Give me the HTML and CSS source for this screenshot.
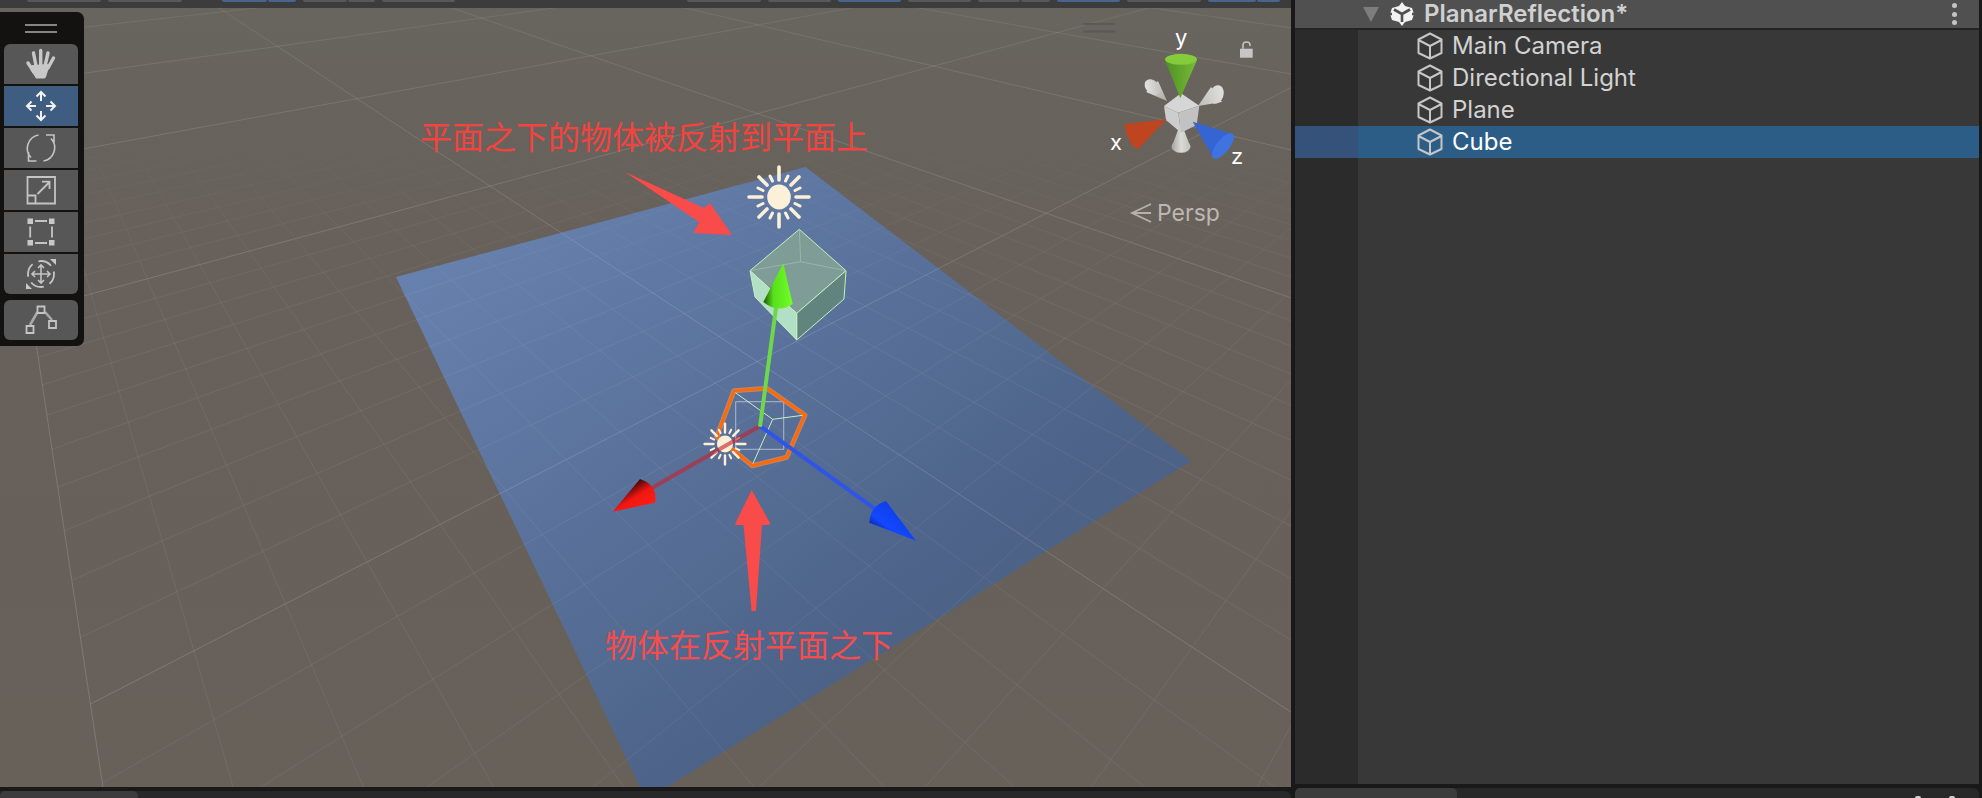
FILE: index.html
```html
<!DOCTYPE html>
<html lang="en">

<head>
    <meta charset="UTF-8">
    <title>PlanarReflection</title>
    <link rel="stylesheet" href="styles.css">
</head>

<body>
    <div class="page">
        <div class="left">
            <div class="top-bar">
                <span class="tb w74"></span>
                <span class="tb w74"></span>
                <span class="tb-group far">
                    <span class="tb on w45"></span>
                    <span class="tb on w28"></span>
                </span>
                <span class="tb-group">
                    <span class="tb w44"></span>
                    <span class="tb w27"></span>
                </span>
                <span class="tb w73"></span>
                <span class="tb w74 farther"></span>
                <span class="tb w63"></span>
                <span class="tb on w63"></span>
                <span class="tb w63"></span>
                <span class="tb-group">
                    <span class="tb w42"></span>
                    <span class="tb w29"></span>
                </span>
                <span class="tb on w63"></span>
                <span class="tb w74"></span>
                <span class="tb-group">
                    <span class="tb on w48"></span>
                    <span class="tb on w23"></span>
                </span>
            </div>

            <div class="scene">
                <svg class="scene-view" viewBox="0 8 1291 779" width="1291" height="779">
                    <defs>
                        <linearGradient id="planeFill" gradientUnits="userSpaceOnUse" x1="450" y1="250" x2="800" y2="700">
                            <stop offset="0" stop-color="#6781ae" />
                            <stop offset="1" stop-color="#4c6287" />
                        </linearGradient>
                        <linearGradient id="redCone" gradientUnits="userSpaceOnUse" x1="640" y1="479" x2="655" y2="503">
                            <stop offset="0" stop-color="#3a0808" />
                            <stop offset=".45" stop-color="#f01612" />
                            <stop offset="1" stop-color="#ff1f14" />
                        </linearGradient>
                        <linearGradient id="blueCone" gradientUnits="userSpaceOnUse" x1="886" y1="501" x2="869" y2="523">
                            <stop offset="0" stop-color="#0f3fe8" />
                            <stop offset=".7" stop-color="#1348ff" />
                            <stop offset="1" stop-color="#0a2ab0" />
                        </linearGradient>
                        <linearGradient id="greenCone" gradientUnits="userSpaceOnUse" x1="763" y1="300" x2="793" y2="300">
                            <stop offset="0" stop-color="#1c4f08" />
                            <stop offset=".35" stop-color="#58e01c" />
                            <stop offset="1" stop-color="#72ff28" />
                        </linearGradient>
                        <linearGradient id="gizmoGreen" gradientUnits="userSpaceOnUse" x1="1165" y1="70" x2="1197" y2="70">
                            <stop offset="0" stop-color="#4f8f24" />
                            <stop offset="1" stop-color="#78bc36" />
                        </linearGradient>
                        <linearGradient id="greyA" gradientUnits="userSpaceOnUse" x1="1146" y1="84" x2="1168" y2="104">
                            <stop offset="0" stop-color="#e2e2e0" />
                            <stop offset="1" stop-color="#a2a09c" />
                        </linearGradient>
                        <linearGradient id="greyB" gradientUnits="userSpaceOnUse" x1="1222" y1="92" x2="1198" y2="106">
                            <stop offset="0" stop-color="#dededc" />
                            <stop offset="1" stop-color="#bcbcb8" />
                        </linearGradient>
                        <linearGradient id="greyC" gradientUnits="userSpaceOnUse" x1="1172" y1="140" x2="1190" y2="140">
                            <stop offset="0" stop-color="#a8a6a2" />
                            <stop offset=".5" stop-color="#dadad8" />
                            <stop offset="1" stop-color="#c2c2be" />
                        </linearGradient>
                    </defs>

                    <polygon class="plane" points="396,277 805.5,167 1191,461 667,787 640,787" />
                    <g id="grid"></g>

                    <!-- reflected cube -->
                    <polygon class="cube-top" points="799.3,229.3 846,270.7 796.7,313.3 750,270.7" />
                    <polygon class="cube-right" points="846,270.7 844,299 796.7,340 796.7,313.3" />
                    <polygon class="cube-left" points="750,270.7 796.7,313.3 796.7,340 755,297" />
                    <path class="cube-back" d="M799.3 229.3 L800.7 261.7 L750 270.7 M800.7 261.7 L846 270.7" />

                    <!-- big sun -->
                    <g class="sun" transform="translate(779 197)">
                        <ellipse class="sun-disc" rx="11.8" ry="12.4" />
                        <path class="ray-long" d="M0 -17V-30 M0 17V30 M-17 0H-30 M17 0H30 M12 -12L20 -20 M-12 -12L-20 -20 M12 12L20 20 M-12 12L-20 20" />
                        <path class="ray-short" d="M6.5 -16L9 -21 M-6.5 -16L-9 -21 M6.5 16L9 21 M-6.5 16L-9 21 M16 -6.5L21 -9 M-16 -6.5L-21 -9 M16 6.5L21 9 M-16 6.5L-21 9" />
                    </g>

                    <!-- selection and wire cube -->
                    <rect class="wire-box" x="735.7" y="401.7" width="48" height="47.6" />
                    <path class="wire" d="M734 391.7 L772.7 419.3 L805 415 M772.7 419.3 L752.3 465" />
                    <polygon class="outline-glow" points="734,390.7 766.7,388.3 805,415 786.7,457.3 752.3,465.7 716.7,436.7" />
                    <polygon class="outline" points="734,390.7 766.7,388.3 805,415 786.7,457.3 752.3,465.7 716.7,436.7" />

                    <!-- small sun -->
                    <g class="sun" transform="translate(725 444) scale(.68)">
                        <ellipse class="sun-disc" rx="11.8" ry="12.4" />
                        <path class="ray-long" d="M0 -17V-30 M0 17V30 M-17 0H-30 M17 0H30 M12 -12L20 -20 M-12 -12L-20 -20 M12 12L20 20 M-12 12L-20 20" />
                        <path class="ray-short" d="M6.5 -16L9 -21 M-6.5 -16L-9 -21 M6.5 16L9 21 M-6.5 16L-9 21 M16 -6.5L21 -9 M-16 -6.5L-21 -9 M16 6.5L21 9 M-16 6.5L-21 9" />
                    </g>

                    <!-- move handles -->
                    <line class="axis-red" x1="760" y1="426" x2="650" y2="489" />
                    <line class="axis-blue" x1="760" y1="426" x2="878" y2="511" />
                    <line class="axis-green" x1="760" y1="426.7" x2="776" y2="308" />
                    <path fill="url(#redCone)" d="M612.7 511.7 L640 479 Q658 485 655 502.7 Z" />
                    <path fill="url(#blueCone)" d="M916 540.7 L886 501 Q870 506 869.3 522.7 Z" />
                    <path fill="url(#greenCone)" d="M783.3 263.3 L763.3 302 Q778 314 792.7 304 Z" />

                    <!-- red arrows -->
                    <polygon class="mark" points="625,172 704,208 710,203 732,235 693.5,233 699,222" />
                    <path class="mark" d="M751.7 490 L770 523 Q770.5 525 768 525 L762 525 L756 611 L751.6 611 L743.5 525 L737 525 Q734.5 525 735.5 523 Z" />

                    <text class="note note-top" x="420" y="149">平面之下的物体被反射到平面上</text>
                    <text class="note note-low" x="605" y="657">物体在反射平面之下</text>

                    <!-- orientation gizmo -->
                    <path fill="url(#greyA)" d="M1167 101 L1146 92 L1158 81 Z" />
                    <ellipse fill="url(#greyA)" cx="1152.5" cy="87" rx="6.5" ry="9" transform="rotate(-48 1152.5 87)" />
                    <path fill="url(#greyB)" d="M1198 106 L1211 87 L1222 102 Z" />
                    <ellipse fill="url(#greyB)" cx="1216.5" cy="94.5" rx="7" ry="9.5" transform="rotate(20 1216.5 94.5)" />
                    <path fill="url(#greyC)" d="M1181 122 L1172 146 H1190 Z" />
                    <ellipse fill="url(#greyC)" cx="1181" cy="146.5" rx="9.5" ry="6.3" />
                    <polygon class="gz-top" points="1181,93.3 1199.3,105.7 1178.3,112.7 1164,106" />
                    <polygon class="gz-left" points="1164,106 1178.3,112.7 1181,132.7 1166,120" />
                    <polygon class="gz-right" points="1199.3,105.7 1196.7,125 1181,132.7 1178.3,112.7" />
                    <path fill="url(#gizmoGreen)" d="M1180.3 98.3 L1165 60 H1197 Z" />
                    <ellipse class="gz-green-cap" cx="1181" cy="59.3" rx="16" ry="5.5" />
                    <path class="gz-red" d="M1166.7 119.3 L1124.3 124.3 Q1127 142 1137.3 150 Z" />
                    <path class="gz-blue" d="M1192.7 121.7 L1232.7 134 L1213.3 157.7 Z" />
                    <ellipse class="gz-blue-cap" cx="1223" cy="146" rx="6.5" ry="15.5" transform="rotate(39 1223 146)" />
                    <text class="axis-name" x="1175" y="45">y</text>
                    <text class="axis-name" x="1110" y="150">x</text>
                    <text class="axis-name" x="1231" y="164">z</text>

                    <!-- lock -->
                    <rect class="lock" x="1240" y="48.7" width="12.7" height="9" />
                    <path class="lock-loop" d="M1243 48.7 V45 Q1243 42 1246.5 42 Q1250 42 1250 45 V46" />

                    <!-- persp label -->
                    <path class="persp-icon" d="M1151 204 L1132 213 L1151 222 M1133 213 H1151" />
                    <text class="persp" x="1157" y="221">Persp</text>

                    <!-- handle of the gizmo overlay -->
                    <path class="grip-dim" d="M1083 24 H1115 M1083 31.5 H1115" />
                </svg>

                <div class="tools">
                    <div class="tools-grip"></div>
                    <div class="tool first">
                        <svg class="tool-icon" viewBox="0 0 32 32">
                            <path class="fill" d="M7 17 L25 16 L21 29 L19.5 30.5 H11 L9.5 28 L5.5 22 Z" />
                            <path class="finger" d="M8.5 5 L11 18 M15.7 2.5 V18 M23 5 L20 18 M28.5 10 L23 20 M3 15 L9 24" />
                        </svg>
                    </div>
                    <div class="tool on">
                        <svg class="tool-icon" viewBox="0 0 32 32">
                            <path class="line bright" d="M16 2 V11 M16 21 V30 M2 16 H11 M21 16 H30 M11.5 6.5 L16 2 L20.5 6.5 M11.5 25.5 L16 30 L20.5 25.5 M6.5 11.5 L2 16 L6.5 20.5 M25.5 11.5 L30 16 L25.5 20.5" />
                        </svg>
                    </div>
                    <div class="tool">
                        <svg class="tool-icon" viewBox="0 0 32 32">
                            <path class="line spin" d="M13.5 3 A13.5 13.5 0 0 0 6 25.5 M3.5 20 V29 H11.5 M18.5 29 A13.5 13.5 0 0 0 26 6.5 M21 3 H29 V11.5" />
                        </svg>
                    </div>
                    <div class="tool">
                        <svg class="tool-icon" viewBox="0 0 32 32">
                            <path class="line" d="M2.5 3 H30 V29.5 H2.5 Z M3 21.5 H10.5 V29 M12.5 20 L24.5 8 M17 7.7 H24.5 V15" />
                        </svg>
                    </div>
                    <div class="tool">
                        <svg class="tool-icon" viewBox="0 0 32 32">
                            <path class="fill" d="M2.5 2.5 H8 V8 H2.5 Z M24 2.5 H29.5 V8 H24 Z M2.5 24 H8 V29.5 H2.5 Z M24 24 H29.5 V29.5 H24 Z" />
                            <path class="line" d="M10 5 H22 M10 27 H22 M5.2 10.5 V21.5 M27 10.5 V21.5" />
                        </svg>
                    </div>
                    <div class="tool last">
                        <svg class="tool-icon" viewBox="0 0 32 32">
                            <path class="fill" d="M25 1 H31 V7 Z M1 25 V31 H7 Z" />
                            <circle class="line ring" cx="16" cy="16" r="13" />
                            <path class="line thin" d="M16 7 V25 M7 16 H25 M13 10 L16 7 L19 10 M13 22 L16 25 L19 22 M10 13 L7 16 L10 19 M22 13 L25 16 L22 19" />
                        </svg>
                    </div>
                    <div class="tool solo">
                        <svg class="tool-icon" viewBox="0 0 32 32">
                            <path class="line dim" d="M5 21 L12.5 8 M20 8 L27 16" />
                            <path class="line" d="M12.5 2.5 H19.5 V9 H12.5 Z M1.5 22 H8.5 V29 H1.5 Z M24 17 H31 V24 H24 Z" />
                        </svg>
                    </div>
                </div>
            </div>

            <div class="foot foot-left">
                <div class="foot-tab tab-left"></div>
            </div>
        </div>

        <div class="right">
            <div class="hier-head">
                <span class="tri"></span>
                <svg class="scene-icon" viewBox="0 0 26 24">
                    <path class="logo" d="M13 0 L16 4 L23 6 L25 12 L23 18 L16 20 L13 24 L10 20 L3 18 L1 12 L3 6 L10 4 Z" />
                    <path class="logo-cut" d="M13 12 V20 M13 12 L5 7.5 M13 12 L21 7.5 M3 12 H1 M25 12 H23" />
                </svg>
                <span class="scene-name">PlanarReflection*</span>
                <span class="dots"><i></i><i></i><i></i></span>
            </div>
            <div class="hier-list">
                <div class="row">
                    <svg class="go-icon" viewBox="0 0 26 28"><path d="M13 1.5 L24.5 7.5 V21 L13 26.5 L1.5 21 V7.5 Z M1.5 8 L13 14 L24.5 8 M13 14 V26" /></svg>
                    <span>Main Camera</span>
                </div>
                <div class="row">
                    <svg class="go-icon" viewBox="0 0 26 28"><path d="M13 1.5 L24.5 7.5 V21 L13 26.5 L1.5 21 V7.5 Z M1.5 8 L13 14 L24.5 8 M13 14 V26" /></svg>
                    <span>Directional Light</span>
                </div>
                <div class="row">
                    <svg class="go-icon" viewBox="0 0 26 28"><path d="M13 1.5 L24.5 7.5 V21 L13 26.5 L1.5 21 V7.5 Z M1.5 8 L13 14 L24.5 8 M13 14 V26" /></svg>
                    <span>Plane</span>
                </div>
                <div class="row selected">
                    <svg class="go-icon" viewBox="0 0 26 28"><path d="M13 1.5 L24.5 7.5 V21 L13 26.5 L1.5 21 V7.5 Z M1.5 8 L13 14 L24.5 8 M13 14 V26" /></svg>
                    <span>Cube</span>
                </div>
            </div>
            <div class="foot foot-right">
                <div class="foot-tab tab-right"></div>
                <span class="foot-dots"><i></i><i></i></span>
            </div>
        </div>
    </div>
    <script type="text/javascript" src="grid.js"></script>
</body>

</html>
```

FILE: styles.css
```css
* {
    box-sizing: border-box;
}

body {
    margin: 0;
    background: #191919;
    overflow: hidden;
}

.page {
    display: flex;
    width: 1982px;
    height: 798px;
    font-family: "Inter", "Liberation Sans", sans-serif;
}

.left {
    display: flex;
    flex-direction: column;
    width: 1291px;
}

/* top bar, only the lower edge of its buttons is in the picture */
.top-bar {
    display: flex;
    flex: none;
    gap: 7px;
    height: 8px;
    padding-left: 27px;
    background: #3c3c3c;
}

.tb {
    display: block;
    height: 2px;
    background: #585858;
    border-radius: 0 0 3px 3px;
}

.tb.on {
    background: #46658c;
}

.tb-group {
    display: flex;
    gap: 1px;
}

.far {
    margin-left: 33px;
}

.farther {
    margin-left: 225px;
}

.w23 { width: 23px; }
.w27 { width: 27px; }
.w28 { width: 28px; }
.w29 { width: 29px; }
.w42 { width: 42px; }
.w44 { width: 44px; }
.w45 { width: 45px; }
.w48 { width: 48px; }
.w63 { width: 63px; }
.w73 { width: 73px; }
.w74 { width: 74px; }

.scene {
    position: relative;
    flex: none;
    height: 779px;
    background: linear-gradient(#68645e, #68605a 40%, #67615a);
}

.scene-view {
    display: block;
}

.plane {
    fill: url(#planeFill);
}

.grid-major {
    stroke: #dcdcdc;
    stroke-width: 1;
}

.grid-minor {
    stroke: #d4d4d4;
    stroke-width: 1;
}

.cube-top {
    fill: #7f9c96;
}

.cube-right {
    fill: #62847f;
}

.cube-left {
    fill: #b2e0c4;
}

.cube-top,
.cube-right,
.cube-left {
    stroke: #c4f0c0;
    stroke-width: 1;
}

.cube-back {
    fill: none;
    stroke: #a4c8b4;
    stroke-width: 1;
    opacity: .6;
}

.sun-disc {
    fill: #fdf0d8;
}

.ray-long,
.ray-short {
    fill: none;
    stroke: #fdf0d8;
    stroke-linecap: round;
}

.ray-long {
    stroke-width: 3.6;
}

.ray-short {
    stroke-width: 3;
}

.wire-box {
    fill: none;
    stroke: #adb8cc;
    stroke-width: 1;
}

.wire {
    fill: none;
    stroke: #c2f0c0;
    stroke-width: 1;
}

.outline {
    fill: none;
    stroke: #ff6a00;
    stroke-width: 3;
    stroke-linejoin: round;
}

.outline-glow {
    fill: none;
    stroke: #ff9a66;
    stroke-width: 5;
    stroke-linejoin: round;
    opacity: .55;
}

.axis-red {
    stroke: #c4232f;
    stroke-width: 4;
    opacity: .62;
}

.axis-blue {
    stroke: #2f54e8;
    stroke-width: 4;
}

.axis-green {
    stroke: #6dd84b;
    stroke-width: 4;
}

.mark {
    fill: #f94b49;
}

.note {
    font-family: "Noto Sans CJK SC", "Liberation Sans", sans-serif;
    font-size: 32px;
}

.note-top {
    fill: #f4423f;
}

.note-low {
    fill: #f64c4c;
}

.gz-top {
    fill: #d6d6d6;
}

.gz-left {
    fill: #cdcdcd;
}

.gz-right {
    fill: #c2c2c2;
}

.gz-green-cap {
    fill: #84cc3c;
}

.gz-red {
    fill: #bf4420;
}

.gz-blue {
    fill: #3465d2;
}

.gz-blue-cap {
    fill: #3f73e0;
}

.axis-name {
    font-size: 22px;
    fill: #fff;
}

.lock {
    fill: #c6c6c6;
}

.lock-loop {
    fill: none;
    stroke: #c6c6c6;
    stroke-width: 1.6;
}

.persp-icon {
    fill: none;
    stroke: #b4b0ab;
    stroke-width: 1.8;
}

.persp {
    font-size: 23px;
    fill: #bcb8b3;
}

.grip-dim {
    fill: none;
    stroke: #595959;
    stroke-width: 2;
}

/* tool strip over the scene */
.tools {
    position: absolute;
    top: 4px;
    left: 0;
    display: flex;
    flex-direction: column;
    gap: 2px;
    width: 84px;
    height: 334px;
    padding: 32px 6px 6px 4px;
    background: #131211;
    border-radius: 0 7px 7px 0;
}

.tools-grip {
    position: absolute;
    top: 12px;
    left: 25px;
    width: 32px;
    height: 9px;
    border-top: 2px solid #858585;
    border-bottom: 2px solid #858585;
}

.tool {
    display: flex;
    align-items: center;
    justify-content: center;
    flex: none;
    height: 40px;
    background: #575757;
}

.tool.first {
    border-radius: 6px 6px 0 0;
}

.tool.last {
    border-radius: 0 0 6px 6px;
}

.tool.on {
    background: #3f5d80;
}

.tool.solo {
    margin-top: 4px;
    border-radius: 6px;
}

.tool-icon {
    width: 32px;
    height: 32px;
}

.fill {
    fill: #c8c8c8;
}

.finger {
    fill: none;
    stroke: #c8c8c8;
    stroke-width: 3.4;
    stroke-linecap: round;
}

.line {
    fill: none;
    stroke: #c4c4c4;
    stroke-width: 1.8;
}

.line.bright {
    stroke: #f2f2f2;
    stroke-width: 2;
}

.line.spin {
    stroke-width: 1.6;
}

.line.ring {
    stroke-dasharray: 14 6.4;
    stroke-dashoffset: 3;
}

.line.thin {
    stroke-width: 1.6;
}

.line.dim {
    stroke: #a8a8a8;
    stroke-width: 2.6;
}

/* tab strips under the panels */
.foot {
    flex: 1;
    margin-top: 4px;
    background: #282828;
}

.foot-left {
    border-radius: 0 6px 0 0;
}

.foot-right {
    display: flex;
    align-items: flex-end;
    justify-content: space-between;
    flex: none;
    height: 10px;
    border-radius: 6px 6px 0 0;
}

.foot-tab {
    height: 100%;
    background: #3c3c3c;
    border-radius: 5px 5px 0 0;
}

.tab-left {
    width: 138px;
}

.tab-right {
    width: 162px;
}

.foot-dots {
    display: flex;
    gap: 28px;
    padding-right: 24px;
}

.foot-dots i {
    display: block;
    width: 6px;
    height: 2px;
    background: #d0d0d0;
    border-radius: 3px 3px 0 0;
}

/* hierarchy */
.right {
    display: flex;
    flex-direction: column;
    width: 684px;
    margin-left: 4px;
}

.hier-head {
    display: flex;
    align-items: center;
    flex: none;
    height: 30px;
    padding-left: 68px;
    background: #505050;
    border-bottom: 2px solid #242424;
}

.tri {
    width: 0;
    height: 0;
    border-left: 8.5px solid transparent;
    border-right: 8.5px solid transparent;
    border-top: 15px solid #7d7d7d;
}

.scene-icon {
    width: 26px;
    height: 24px;
    margin-left: 10px;
}

.logo {
    fill: #f2f2f2;
}

.logo-cut {
    fill: none;
    stroke: #505050;
    stroke-width: 2.6;
}

.scene-name {
    margin-left: 9px;
    margin-top: -2px;
    font-size: 24px;
    font-weight: 600;
    color: #d0d0d0;
}

.dots {
    display: flex;
    flex-direction: column;
    gap: 3.5px;
    margin-left: auto;
    margin-right: 22px;
}

.dots i {
    display: block;
    width: 5px;
    height: 5px;
    background: #c4c4c4;
    border-radius: 50%;
}

.hier-list {
    flex: none;
    height: 754px;
    background: linear-gradient(to right, #2b2b2b 63px, #383838 63px);
}

.row {
    display: flex;
    align-items: center;
    gap: 9px;
    height: 32px;
    padding-left: 122px;
    font-size: 24px;
    color: #d2d2d2;
}

.row span {
    margin-top: -2px;
}

.row.selected {
    color: #fff;
    background: linear-gradient(to right, #34527a 63px, #2c5d87 63px);
}

.go-icon {
    width: 26px;
    height: 28px;
    fill: none;
    stroke: #c6c6c6;
    stroke-width: 2;
    stroke-linejoin: round;
}
```

FILE: grid.js
```js
// perspective floor grid, one unit per cell, u runs to the right vanishing
// point and v to the left one
var svgNs = 'http://www.w3.org/2000/svg';
var grid = document.getElementById('grid');

var ox = 90.4, oy = 704,
    rx = 1777, ry = -162,
    lx = -40, ly = -162,
    a = .0654, b = .0834;

function project(u, v) {
    var w = 1 + a * u + b * v;
    return {
        x: (ox + a * u * rx + b * v * lx) / w,
        y: (oy + a * u * ry + b * v * ly) / w,
        w: w
    };
}

function onScreen(p, q) {
    if (p.w < .25 || q.w < .25) return false;
    if (p.x < -300 && q.x < -300) return false;
    if (p.x > 1600 && q.x > 1600) return false;
    if (p.y < -100 && q.y < -100) return false;
    if (p.y > 900 && q.y > 900) return false;
    return true;
}

function addSegment(p, q, major) {
    if (!onScreen(p, q)) return;
    var far = (p.w + q.w) / 2;
    var op;
    if (major) {
        op = far > 5 ? .1 : .2 - (far - 1) * .025;
    } else {
        op = far > 3 ? 0 : far < 1.7 ? .09 : .09 * (3 - far) / 1.3;
    }
    if (op <= 0) return;
    var line = document.createElementNS(svgNs, 'line');
    line.setAttribute('x1', p.x.toFixed(1));
    line.setAttribute('y1', p.y.toFixed(1));
    line.setAttribute('x2', q.x.toFixed(1));
    line.setAttribute('y2', q.y.toFixed(1));
    line.setAttribute('class', major ? 'grid-major' : 'grid-minor');
    line.setAttribute('stroke-opacity', op.toFixed(3));
    grid.appendChild(line);
}

function drawGrid() {
    var u, v;
    for (u = 0; u <= 80; u++) {
        for (v = -20; v < 70; v++) {
            addSegment(project(u, v), project(u, v + 1), u % 10 == 0);
        }
    }
    for (v = -20; v <= 70; v++) {
        for (u = 0; u < 80; u++) {
            addSegment(project(u, v), project(u + 1, v), v % 10 == 0);
        }
    }
}

drawGrid();
```
